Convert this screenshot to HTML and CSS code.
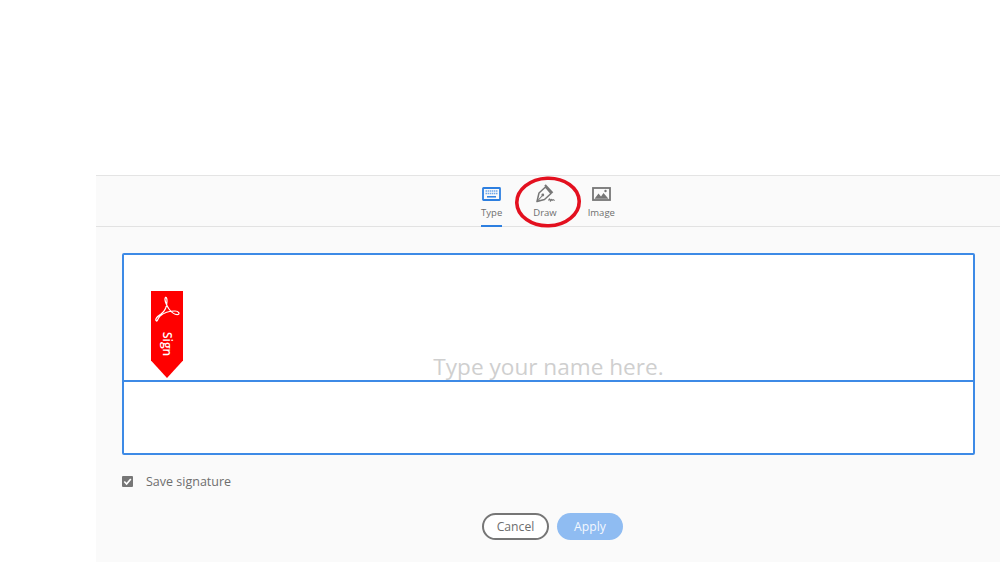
FILE: index.html
```html
<!DOCTYPE html>
<html lang="en">
<head>
<meta charset="utf-8">
<title>Sign</title>
<link rel="stylesheet" href="styles.css">
</head>
<body>
<main class="panel">
  <nav class="tabs">
    <div class="tab active">
      <svg class="tab-icon" width="19" height="14" viewBox="0 0 19 14"><rect x="1" y="1" width="17" height="12" rx=".5" fill="none" stroke="#2d7fe0" stroke-width="1.800"/><path d="M3.500 4h12M3.500 6.500h12" stroke="#6fa8ea" stroke-width="1.500" stroke-dasharray="1.500 .6"/><path d="M5 9.800h9" stroke="#2d7fe0" stroke-width="1.500"/></svg>
      <span class="tab-label">Type</span>
    </div>
    <div class="tab draw">
      <svg class="tab-icon" width="22" height="21" viewBox="0 0 22 21"><path d="M3 18.500 5 10 11.500 4 17 10.500 10.500 16.500z" fill="none" stroke="#767676" stroke-width="1.500" stroke-linejoin="round"/><path d="M11 2 18.500 10" stroke="#767676" stroke-width="2"/><path d="M3 18.500 8 13" stroke="#767676" stroke-width="1.100"/><circle cx="8.800" cy="12" r="1.400" fill="#767676"/><path d="M14.500 17.500c1-2.400 1.300-2.400 1.700 0s.8-2 1.300-1 .7 1.200 1.200.3.800.7 2 .7" fill="none" stroke="#767676" stroke-width="1.100"/></svg>
      <span class="tab-label">Draw</span>
      <svg class="circle" width="67" height="52" viewBox="0 0 67 52"><ellipse cx="33" cy="26" rx="31.200" ry="23.800" fill="none" stroke="#e3101f" stroke-width="3.600" transform="rotate(-2 33 26)"/></svg>
    </div>
    <div class="tab">
      <svg class="tab-icon" width="19" height="14" viewBox="0 0 19 14"><rect x="1" y="1" width="17" height="12" fill="none" stroke="#767676" stroke-width="1.800"/><path d="M2.500 11.800 6.500 6.500l2.500 3 2.500-3.500 5 5.800z" fill="#767676"/><circle cx="13.500" cy="4" r="1.200" fill="#767676"/></svg>
      <span class="tab-label">Image</span>
    </div>
  </nav>
  <section class="content">
    <div class="field">
      <div class="badge">
        <svg class="acrobat" width="26" height="27" viewBox="0 0 26 27"><path d="M2.500 25C.5 23.500 3 20.500 7 18c3.500-2.500 6-7 6-13 0-3-.7-4-1.500-3.700C10 3 12 9 15 13c2 2.700 6 6 9 5.500 2-.5 1-3.500-3-3.500-5 0-11 1.500-15 5C4 22 3.500 25.500 2.500 25z" fill="none" stroke="#fff" stroke-width="1.200"/></svg>
        <span class="badge-text">Sign</span>
      </div>
      <div class="placeholder">Type your name here.</div>
      <div class="baseline"></div>
    </div>
    <label class="save">
      <span class="check"><svg width="11" height="11" viewBox="0 0 11 11"><path d="M2.300 5.500 4.600 8 8.800 3" fill="none" stroke="#fff" stroke-width="1.700"/></svg></span>
      <span class="save-text">Save signature</span>
    </label>
    <div class="actions">
      <button class="btn cancel">Cancel</button>
      <button class="btn apply">Apply</button>
    </div>
  </section>
</main>
</body>
</html>
```
FILE: styles.css
```css
* { box-sizing: border-box; }
html, body { margin: 0; height: 100%; background: #fff; overflow: hidden; }
body { padding: 175px 0 0 96px; font-family: "Open Sans", "Noto Sans", sans-serif; }
.panel { height: 387px; background: #fafafa; border-top: 1px solid #e4e4e4; }
.tabs { height: 51px; display: flex; justify-content: center; gap: 31px; border-bottom: 1px solid #e2e2e2; }
.tab { position: relative; display: flex; flex-direction: column; align-items: center; padding-top: 11px; white-space: nowrap; }
.tab.active { border-bottom: 2px solid #2d7fe0; height: 51px; }
.tab-icon { height: 14px; flex: none; overflow: visible; }
.draw .tab-icon { height: 21px; margin-top: -4px; margin-bottom: -3px; }
.tab-label { margin-top: 5px; font-size: 9.500px; line-height: 14px; color: #6e6e6e; }
.circle { position: absolute; left: -18px; top: 0; }
.content { padding: 26px 25px 0 26px; }
.field { position: relative; height: 202px; background: #fff; border: 2px solid #3d8ae6; border-radius: 2px; }
.badge { position: absolute; left: 27px; top: 36px; width: 32px; height: 87px; background: #f00; clip-path: polygon(0 0, 100% 0, 100% 80%, 50% 100%, 0 80%); display: flex; flex-direction: column; align-items: center; padding-top: 5px; }
.acrobat { flex: none; }
.badge-text { margin-top: 9px; writing-mode: vertical-rl; color: #fff; font-size: 12px; font-weight: 600; line-height: 14px; }
.placeholder { position: absolute; left: 0; right: 0; top: 96px; text-align: center; font-size: 22.600px; line-height: 32px; color: #cfcfcf; }
.baseline { position: absolute; left: 0; right: 0; top: 125px; height: 2px; background: #3d8ae6; }
.save { display: flex; align-items: center; gap: 13px; margin-top: 17px; height: 18px; }
.check { width: 11px; height: 11px; background: #767676; border-radius: 1px; display: flex; }
.save-text { font-size: 12.500px; color: #6e6e6e; }
.actions { display: flex; justify-content: center; gap: 8px; margin-top: 23px; padding-left: 8px; }
.btn { height: 27px; border-radius: 14px; font-family: inherit; font-size: 12.200px; padding: 0; }
.cancel { width: 67px; background: #fff; border: 2px solid #767676; color: #6e6e6e; }
.apply { width: 66px; background: #8fbcf2; border: 0; color: #f4f8fe; }
```
